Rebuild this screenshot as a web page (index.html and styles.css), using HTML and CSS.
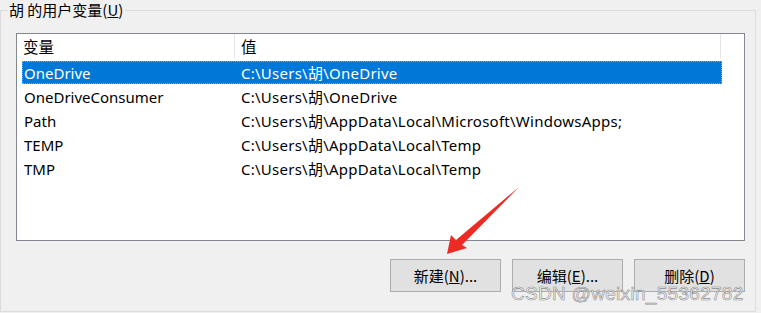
FILE: index.html
```html
<!DOCTYPE html>
<html lang="zh-CN">
<head>
    <meta charset="UTF-8">
    <title>用户变量</title>
    <link rel="stylesheet" href="styles.css">
</head>
<body>
    <fieldset class="group">
        <legend class="group-title">胡 的用户变量(<u>U</u>)</legend>

        <div class="listview">
            <div class="lv-header">
                <div class="col col-name">变量</div>
                <div class="col col-value">值</div>
                <div class="col col-rest"></div>
            </div>
            <div class="lv-body">
                <div class="lv-row selected">
                    <div class="cell cell-name">OneDrive</div>
                    <div class="cell cell-value">C:\Users\胡\OneDrive</div>
                </div>
                <div class="lv-row">
                    <div class="cell cell-name">OneDriveConsumer</div>
                    <div class="cell cell-value">C:\Users\胡\OneDrive</div>
                </div>
                <div class="lv-row">
                    <div class="cell cell-name">Path</div>
                    <div class="cell cell-value">C:\Users\胡\AppData\Local\Microsoft\WindowsApps;</div>
                </div>
                <div class="lv-row">
                    <div class="cell cell-name">TEMP</div>
                    <div class="cell cell-value">C:\Users\胡\AppData\Local\Temp</div>
                </div>
                <div class="lv-row">
                    <div class="cell cell-name">TMP</div>
                    <div class="cell cell-value">C:\Users\胡\AppData\Local\Temp</div>
                </div>
            </div>
        </div>

        <div class="buttons">
            <button class="btn">新建(<u>N</u>)...</button>
            <button class="btn">编辑(<u>E</u>)...</button>
            <button class="btn">删除(<u>D</u>)</button>
        </div>
    </fieldset>

    <!-- flèche rouge d'annotation -->
    <svg class="arrow" width="761" height="313" viewBox="0 0 761 313">
        <polygon points="519,187 462,245 467,248 447,254 451,235 456,240" fill="#ee2a24"/>
    </svg>

    <div class="watermark">CSDN @weixin_55362782</div>
</body>
</html>
```

FILE: styles.css
```css
body {
    margin: 0;
    background-color: #f0f0f0;
    font-family: "Noto Sans", "Noto Sans CJK SC", sans-serif;
    font-size: 15px;
    color: #000;
    width: 761px;
    height: 313px;
    overflow: hidden;
    position: relative;
}
.group {
    margin: 0;
    width: 756px;
    height: 312px;
    box-sizing: border-box;
    border: 1px solid #dcdcdc;
    padding: 0 0 0 15px;
}
.group-title {
    padding: 0 2px 0 1px;
    margin-left: -8px;
    line-height: 20px;
    height: 20px;
    font-family: "Noto Sans CJK SC", sans-serif;
}
.listview {
    width: 729px;
    height: 208px;
    box-sizing: border-box;
    margin-top: 13px;
    border: 1px solid #828790;
    background-color: #fff;
}
.lv-header {
    display: flex;
    height: 24px;
    margin-top: 0;
}
.col {
    line-height: 24px;
    padding-left: 6px;
    font-family: "Noto Sans CJK SC", sans-serif;
    font-size: 15.5px;
    box-sizing: border-box;
}
.col-name {
    width: 218px;
    border-right: 1px solid #e5e5e5;
}
.col-value {
    width: 486px;
    border-right: 1px solid #e5e5e5;
}
.lv-body {
    padding: 3px 0 0 5px;
}
.lv-row {
    display: flex;
    width: 700px;
    height: 24px;
    line-height: 22px;
    box-sizing: border-box;
    border: 1px dotted transparent;
}
.lv-row.selected {
    background-color: #0078d7;
    color: #fff;
    border-color: #e89a3c;
    height: 23px;
    margin-bottom: 1px;
}
.cell {
    padding-left: 1px;
    white-space: nowrap;
}
.cell-name {
    width: 216px;
}
.cell-value {
    letter-spacing: 0.25px;
}
.buttons {
    display: flex;
    justify-content: flex-end;
    gap: 11px;
    margin-top: 18px;
    padding-right: 10px;
}
.btn {
    width: 111px;
    height: 33px;
    background-color: #e1e1e1;
    border: 1px solid #adadad;
    font-family: "Noto Sans CJK SC", sans-serif;
    font-size: 15px;
    color: #000;
    padding: 0;
}
.arrow {
    position: absolute;
    left: 0;
    top: 0;
    pointer-events: none;
}
.watermark {
    position: absolute;
    left: 511px;
    top: 283px;
    font-family: "Liberation Sans", sans-serif;
    font-size: 19px;
    color: rgba(248, 248, 248, 0.85);
    -webkit-text-stroke: 0.6px rgba(110, 110, 110, 0.8);
    letter-spacing: 0.3px;
}
```
